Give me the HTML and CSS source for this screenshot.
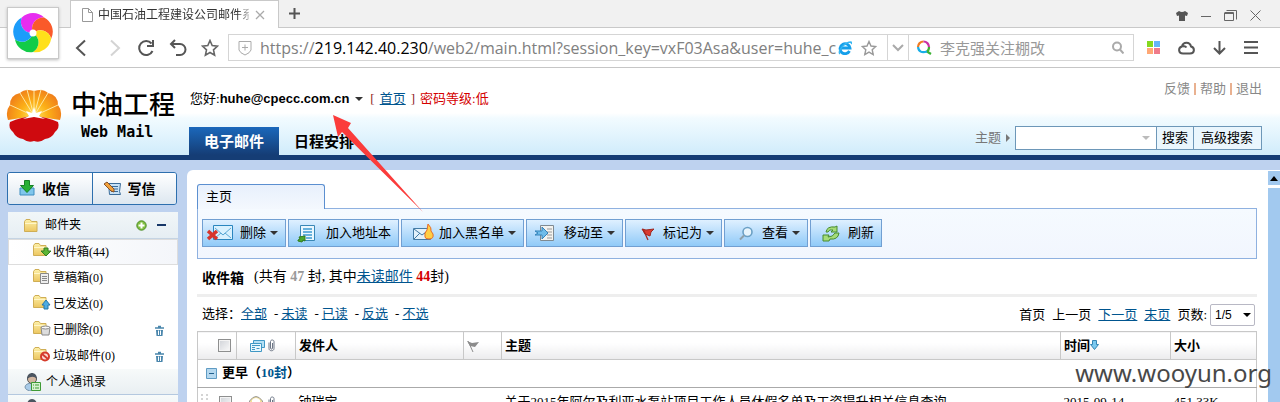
FILE: index.html
```html
<!DOCTYPE html>
<html lang="zh-CN">
<head>
<meta charset="utf-8">
<title>中国石油工程建设公司邮件系统</title>
<link rel="stylesheet" href="styles.css">
</head>
<body>
<svg class="defs" aria-hidden="true">
  <defs>
    <linearGradient id="gold" x1="0" y1="0" x2="0" y2="1"><stop offset="0" stop-color="#fdf0a8"/><stop offset="1" stop-color="#ecc660"/></linearGradient>
    <radialGradient id="petal" gradientUnits="userSpaceOnUse" cx="28" cy="28" r="28"><stop offset="0" stop-color="#ffe860"/><stop offset=".5" stop-color="#fcb017"/><stop offset="1" stop-color="#f0801a"/></radialGradient>
    <g id="folder"><path d="M.5 12.500V2.500L2 .5h4l1.500 2h5.500v10z" fill="url(#gold)" stroke="#cfae55"/><path d="M1 4.500h11.500" stroke="#fff6c8"/></g>
    <g id="bin"><path d="M0 3h9M3 1.500h3" stroke="#4a86ac" stroke-width="1.500"/><path d="M1 5h7l-.5 6h-6z" fill="#4a86ac"/><path d="M3.500 5.500v4.500M5.500 5.500v4.500" stroke="#fff"/></g>
    <g id="clip"><path d="M1 3.500v6c0 3 5 3 5 0v-7c0-2-3.500-2-3.500 0v6.500c0 1.500 2 1.500 2 0v-5" fill="none" stroke="#6d7686"/></g>
    <g id="person"><ellipse cx="8" cy="14" rx="7" ry="4" fill="#a9cbe8" stroke="#7795ad"/><circle cx="8" cy="6" r="4.500" fill="#d2b6a0" stroke="#555"/><path d="M3 6c0-8 10-8 10 0-3-3-6-3-10 0" fill="#4b5560"/></g>
    <path id="blade" d="M0 0A11 11 0 0 1-11.200-15.400A16 16 0 0 1 11.200-15.400A11 11 0 0 0 0 0Z"/>
  </defs>
</svg>

<div class="browser">
  <div class="tabstrip">
    <div class="tab">
      <svg width="12" height="14" fill="#fff" stroke="#999"><path d="M1.500.5h6l4 4v9h-10zM7.500.5v4h4"/></svg>
      <span class="tab-title">中国石油工程建设公司邮件系</span>
      <button class="plain" aria-label="关闭标签"><svg width="10" height="10" stroke="#aaa" stroke-width="1.300"><path d="M1 1l8 8M9 1l-8 8"/></svg></button>
    </div>
    <button class="plain new-tab" aria-label="新标签"><svg width="11" height="11" stroke="#555" stroke-width="2"><path d="M5.500 0v11M0 5.500h11"/></svg></button>
    <div class="win-buttons">
      <button class="plain" aria-label="皮肤"><svg width="12" height="10" fill="#555"><path d="M3 0q3 2 6 0l3 2-1 3-2-.5V10H3V4.500L1 5 0 2z"/></svg></button>
      <button class="plain" aria-label="最小化"><svg width="10" height="10" stroke="#666"><path d="M0 5.500h10"/></svg></button>
      <button class="plain" aria-label="还原"><svg width="13" height="11" fill="none" stroke="#666"><path d="M.5 3v7.500h9V2.500h-9M.5 3.500h9M2.500 .5h10v9"/></svg></button>
      <button class="plain" aria-label="关闭"><svg width="11" height="11" stroke="#666"><path d="M.5.5l10 10M10.500.5l-10 10"/></svg></button>
    </div>
  </div>
  <div class="navbar">
    <div class="nav-buttons">
      <button class="plain" aria-label="后退"><svg width="18" height="18" fill="none" stroke="#555" stroke-width="2"><path d="M12 1.500L4 9l8 7.500"/></svg></button>
      <button class="plain" aria-label="前进"><svg width="18" height="18" fill="none" stroke="#d4d4d4" stroke-width="2"><path d="M6 1.500L14 9l-8 7.500"/></svg></button>
      <button class="plain" aria-label="刷新"><svg width="18" height="18" fill="none" stroke="#555" stroke-width="2"><path d="M14.500 4.500A7 7 0 1 0 15.500 12M16 1v6h-6"/></svg></button>
      <button class="plain" aria-label="撤销"><svg width="18" height="18" fill="none" stroke="#555" stroke-width="2"><path d="M2 5h9a5 5 0 0 1 0 11H7M6 1L2 5l4 4"/></svg></button>
      <button class="plain" aria-label="收藏"><svg width="18" height="18" fill="none" stroke="#666" stroke-width="1.600"><path d="M9 1.500l2.200 5 5.300.6-4 3.700 1.100 5.400L9 13.500l-4.600 2.700 1.100-5.400-4-3.700 5.300-.6z"/></svg></button>
    </div>
    <div class="address">
      <svg width="14" height="16" fill="none" stroke="#aaa"><path d="M1 1.500h12V10q-1 3-6 5-5-2-6-5zM7 4.500v6M4 7.500h6"/></svg>
      <div class="url">https://<b>219.142.40.230</b>/web2/main.html?session_key=vxF03Asa&amp;user=huhe_cp</div>
      <svg width="14" height="14" fill="none"><path d="M2.500 7H12A5 5 0 1 0 11.500 10" stroke="#159fea" stroke-width="2.800"/><path d="M2 13C-1 10 7 1 13 1q1 1 0 2" stroke="#35b6f2" stroke-width="1.300"/></svg>
      <button class="plain" aria-label="添加收藏"><svg width="16" height="16" fill="none" stroke="#999" stroke-width="1.400"><path d="M8 1.500l2 4.500 4.700.5-3.500 3.200 1 4.800L8 12.100l-4.200 2.400 1-4.800L1.300 6.500 6 6z"/></svg></button>
      <button class="plain drop" aria-label="展开"><svg width="12" height="8" fill="none" stroke="#aaa" stroke-width="2"><path d="M1 1l5 5 5-5"/></svg></button>
      <svg class="engine" width="16" height="15" fill="none" stroke-width="2.200"><path d="M2 7a5.500 5.500 0 0 1 5.500-5.500" stroke="#f27b21"/><path d="M7.500 1.500A5.500 5.500 0 0 1 13 7" stroke="#cc31a5"/><path d="M13 7q0 3.500-2 4.500l4 2.500" stroke="#3bb334"/><path d="M11 11.500Q3 14 2 7" stroke="#18aee7"/></svg>
      <input class="web-search" aria-label="网页搜索" value="李克强关注棚改">
      <button class="plain lens" aria-label="搜索"><svg width="12" height="13" fill="none" stroke="#aaa" stroke-width="2"><circle cx="5" cy="5.500" r="4"/><path d="M8 8.500l3.500 4"/></svg></button>
    </div>
    <div class="nav-tools">
      <button class="plain" aria-label="应用"><svg width="13" height="13"><path fill="#84d91f" d="M0 0h6v6H0z"/><path fill="#63b5f8" d="M7 0h6v6H7z"/><path fill="#ffa875" d="M0 7h6v6H0z"/><path fill="#ef7b8a" d="M7 7h6v6H7z"/></svg></button>
      <button class="plain" aria-label="云"><svg width="17" height="14" fill="none" stroke="#555" stroke-width="2"><path d="M5 12.500h7c5 0 5-6 1-7-1-5-8-5-9 0-4 1-4 7 1 7zM5 5.500q2-1 3.500 1"/></svg></button>
      <button class="plain" aria-label="下载"><svg width="13" height="14" fill="none" stroke="#555" stroke-width="2"><path d="M6.500 0v12M1 7l5.500 5.500L12 7"/></svg></button>
      <button class="plain" aria-label="菜单"><svg width="14" height="13" stroke="#555" stroke-width="2"><path d="M0 1h14M0 6.500h14M0 12h14"/></svg></button>
    </div>
  </div>
  <div class="avatar">
    <svg width="42" height="42" viewBox="-21 -21 42 42">
      <use href="#blade" fill="#e72df0"/>
      <use href="#blade" fill="#fa5a2a" transform="rotate(72)"/>
      <use href="#blade" fill="#ffe01a" transform="rotate(144)"/>
      <use href="#blade" fill="#12cc48" transform="rotate(216)"/>
      <use href="#blade" fill="#1c9cfa" transform="rotate(288)"/>
      <circle r="3.500" fill="#fff"/>
    </svg>
  </div>
</div>

<header class="mail-head">
  <div class="logo">
    <svg width="56" height="57" viewBox="0 0 56 57">
      <path d="M28 28L14 5q5-5 14-2 9-3 14 2zM28 28L14 5Q4 7 4 17q-5 6-2 15zM28 28L42 5q10 2 10 12 5 6 2 15z" fill="url(#petal)"/>
      <path d="M28 28L21 1.500M28 28l7-26.500M28 28L14 5M28 28L42 5M28 28L4 17M28 28l24-11M28 28V2" stroke="#ffe7a0"/>
      <path d="M4 34q11-5 24-6 13 1 24 6 2 6-3 10-3 6-10 7-5 4-11 2-6 2-11-2-7-1-10-7-5-4-3-10z" fill="#cf0a0f"/>
      <path d="M28 19l2 6 6-2-3 5 6 3-11-2-11 2 6-3-3-5 6 2z" fill="#fff"/>
    </svg>
    <div class="brand"><strong>中油工程</strong><span>Web Mail</span></div>
  </div>
  <div class="head-main">
    <div class="greet"><span>您好:</span><b>huhe@cpecc.com.cn</b><i class="caret"></i><span class="home"><span>[</span><a href="#">首页</a><span>]</span></span><span class="level">密码等级:低</span></div>
    <nav class="main-tabs"><a class="active" href="#">电子邮件</a><a href="#">日程安排</a></nav>
  </div>
  <div class="head-side">
    <div class="quick"><a href="#">反馈</a><i></i><a href="#">帮助</a><i></i><a href="#">退出</a></div>
    <form class="mail-search">
      <label for="q">主题</label><i class="tri"></i>
      <div class="search-box">
        <input id="q" type="text"><i class="caret pale"></i>
        <button type="button">搜索</button><button type="button" class="adv">高级搜索</button>
      </div>
    </form>
  </div>
</header>

<div class="workspace">
  <aside class="sidebar">
    <div class="compose">
      <button><svg width="16" height="16"><path d="M1 8h14v7H1z" fill="#7fc6ec" stroke="#3e8ec0"/><path d="M5.500.5h5v5h4L8 12.500 1.500 5.500h4z" fill="#27b035" stroke="#168026"/></svg>收信</button>
      <button><svg width="17" height="16"><path d="M4.500 3.500h12l-1 8 1 3h-11z" fill="#c7e2f7" stroke="#3b6c99"/><path d="M8 6.500h6M8 9h6M7 11.500h7" stroke="#3b6c99"/><path d="M0 4l3-2 7 7v3l-3-1z" fill="#f2a13a" stroke="#85512a"/></svg>写信</button>
    </div>
    <div class="folders">
      <div class="folder-head"><svg width="14" height="13"><use href="#folder"/></svg><span>邮件夹</span>
        <button class="plain plus" aria-label="新建"><svg width="11" height="11"><circle cx="5.500" cy="5.500" r="4.700" fill="#80be3f" stroke="#4c8d28"/><path d="M5.500 2.500v6M2.500 5.500h6" stroke="#fff" stroke-width="2"/></svg></button>
        <button class="plain" aria-label="收起"><svg width="9" height="2"><path d="M0 0h9v2H0z" fill="#173768"/></svg></button></div>
      <a class="folder on" href="#"><svg width="18" height="15"><use href="#folder"/><path d="M11 5h4v3h3l-5 5-5-5h3z" fill="#5cb536" stroke="#347d20"/></svg><span>收件箱(44)</span></a>
      <a class="folder" href="#"><svg width="18" height="15"><use href="#folder"/><path d="M7.500 4.500h8v10h-8z" fill="#eee" stroke="#888"/><path d="M9 7.500h5M9 9.500h5M9 11.500h5" stroke="#888"/></svg><span>草稿箱(0)</span></a>
      <a class="folder" href="#"><svg width="18" height="15"><use href="#folder"/><path d="M11 14h4v-4h2l-4-5-4 5h2z" fill="#4dabe3" stroke="#2676a9"/></svg><span>已发送(0)</span></a>
      <a class="folder" href="#"><svg width="18" height="15"><use href="#folder"/><path d="M8 6h9l-1 8H9z" fill="#ddd" stroke="#888"/><ellipse cx="12.500" cy="6.500" rx="4" ry="1.500" fill="#f8f8f8" stroke="#888"/></svg><span>已删除(0)</span><svg class="bin" width="9" height="11"><use href="#bin"/></svg></a>
      <a class="folder" href="#"><svg width="18" height="15"><use href="#folder"/><circle cx="12" cy="9.500" r="4" fill="#fbd9d3" stroke="#d53b2b" stroke-width="2"/><path d="M9 7l6 5" stroke="#d53b2b" stroke-width="2"/></svg><span>垃圾邮件(0)</span><svg class="bin" width="9" height="11"><use href="#bin"/></svg></a>
      <a class="contacts" href="#"><svg width="18" height="18"><use href="#person"/><path d="M7.500 9.500h9v8h-9z" fill="#d8f2cf" stroke="#3e9b35"/><path d="M9 12h1m1 0h4m-6 3h1m1 0h4" stroke="#3e9b35"/></svg><span>个人通讯录</span></a>
      <a class="contacts" href="#" aria-label="联系人"><svg width="18" height="18"><use href="#person"/></svg></a>
    </div>
  </aside>

  <main class="panel">
    <div class="page-tab">主页</div>
    <div class="toolbar">
      <button><svg width="37" height="26"><path d="M10.500 5.500h19v14h-19z" fill="#d9f1fe" stroke="#2a86bf"/><path d="M12 18l6-5 2 2 2-2 6 5M12 8l8 7 8-7" fill="none" stroke="#5da9d4"/><path d="M5 11l9 8M14 11l-9 8" stroke="#d6352d" stroke-width="3.500"/></svg>删除<i class="caret"></i></button>
      <button><svg width="37" height="26"><path d="M11.500 5.500h14v15h-14z" fill="#eaf7fe" stroke="#3987b6"/><path d="M14 9h9M14 12h9M14 15h9M17 18h6" stroke="#3d9bd1" stroke-width="1.500"/><path d="M9 20l2-1-1-2 6-1v5l-2-1-1 2-4-1z" fill="#4ba82e" stroke="#327d1c"/></svg>加入地址本</button>
      <button><svg width="37" height="26"><path d="M11.500 8.500h17v11h-17z" fill="#e3f2fb" stroke="#447ba5"/><path d="M12 9l8 6 8-6M12 19l6-6M28 19l-6-6" fill="none" stroke="#447ba5"/><path d="M23 17q-1-4 2-7l1-6q4 4 3 7l2 3q1 5-4 5-4 0-4-2" fill="#ffcf45" stroke="#e86c28"/></svg>加入黑名单<i class="caret"></i></button>
      <button><svg width="37" height="26"><path d="M13.500 5.500h13v15h-13z" fill="#f3f3ef" stroke="#7f8a91"/><path d="M20 9h5M20 12h5M20 15h5M20 18h5" stroke="#999"/><path d="M8 11h7V7l6 6-6 6v-4H8l3-2z" fill="#6fbce9" stroke="#3382ba"/></svg>移动至<i class="caret"></i></button>
      <button><svg width="37" height="26"><path d="M16 9l4 1 8-1-3 3-1 4-5-2z" fill="#da3b31" stroke="#9d2922"/><path d="M17 9l5 11" stroke="#a82721" stroke-width="1.300"/></svg>标记为<i class="caret"></i></button>
      <button><svg width="37" height="26"><circle cx="22.500" cy="12" r="4.500" fill="#e7f4fc" stroke="#6ba0c5" stroke-width="1.600"/><path d="M19 15.500l-4 4" stroke="#8fa0aa" stroke-width="2"/></svg>查看<i class="caret"></i></button>
      <button><svg width="37" height="26" stroke="#478b30" fill="#a5dc78"><path d="M15 12q1-6 9-5l2-1v6h-6l2-2q-4-1-5 2z"/><path d="M28 13q-1 7-9 6l-1 2-6 0v-6h6l-1 2q5 0 7-4z"/></svg>刷新</button>
    </div>
    <div class="summary"><h1>收件箱</h1><span>(共有 <b class="total">47</b> 封, 其中<a href="#">未读邮件</a> <b class="unread">44</b>封)</span></div>
    <div class="list-tools">
      <div class="select-line">选择：<a href="#">全部</a><i>-</i><a href="#">未读</a><i>-</i><a href="#">已读</a><i>-</i><a href="#">反选</a><i>-</i><a href="#">不选</a></div>
      <div class="pager"><span>首页</span><span>上一页</span><a href="#">下一页</a><a href="#">末页</a><label for="pg">页数:</label><div class="page-pick"><select id="pg"><option>1/5</option></select><i class="caret"></i></div></div>
    </div>
    <table class="mails">
      <colgroup><col class="c-check"><col class="c-icons"><col class="c-from"><col class="c-flag"><col><col class="c-time"><col class="c-size"></colgroup>
      <thead><tr>
        <th class="check"><input type="checkbox" aria-label="全选"></th>
        <th class="icons"><svg width="27" height="14"><path d="M4.500 4V1.500h11v7H13" fill="#b5e0f4" stroke="#4098c5"/><path d="M1.500 4.500h11v8h-11z" fill="#e9f7fd" stroke="#4098c5"/><path d="M3 6.500h8" stroke="#4098c5"/><path d="M3 8.500h3M3 10.500h3M7.500 9.500h3" stroke="#4098c5"/><use href="#clip" x="19" y="0"/></svg></th>
        <th>发件人</th>
        <th class="flag"><svg width="13" height="12"><path d="M0 1l5 2 7-1-4 5-5-1z" fill="#8c8c8c"/><path d="M1 1l5 11" stroke="#8c8c8c"/></svg></th>
        <th>主题</th>
        <th>时间<svg width="9" height="11"><path d="M2.500.5h4v4h2l-4 5-4-5h2z" fill="#7cc9ef" stroke="#3586b4"/></svg></th>
        <th>大小</th>
      </tr></thead>
      <tbody>
        <tr class="group"><td colspan="7"><svg width="11" height="11"><path d="M.5.5h10v10H.5z" fill="#b5d8ef" stroke="#5f9bc3"/><path d="M3 5.500h5" stroke="#205f8d"/></svg><b>更早（<a href="#">10封</a>）</b></td></tr>
        <tr class="mail">
          <td class="check"><svg width="8" height="14" fill="#d4d4d4"><path d="M0 0h2v2H0zM5 0h2v2H5zM0 4h2v2H0zM5 4h2v2H5zM0 8h2v2H0zM5 8h2v2H5z"/></svg><input type="checkbox" aria-label="选择邮件"></td>
          <td class="icons"><svg width="27" height="14"><path d="M.5 5q6.500-9 13 0v8H.5z" fill="#f1df9d" stroke="#999"/><path d="M3 4q4-4 8 0v3H3z" fill="#fff"/><use href="#clip" x="19" y="0"/></svg></td>
          <td>钟瑞宝</td><td></td>
          <td>关于2015年阿尔及利亚水泵站项目工作人员休假名单及工资提升相关信息查询</td>
          <td>2015-09-14</td><td>451.33K</td>
        </tr>
      </tbody>
    </table>
  </main>
  <div class="scrollbar"><button aria-label="向上滚动"><svg width="8" height="5"><path d="M0 5l4-5 4 5z"/></svg></button><div class="thumb"></div></div>
</div>

<svg class="pointer" width="92" height="100"><path d="M0 1l18 8-3 5 75 84L9 18l-4 5z" fill="#fb3c3b"/></svg>
<div class="watermark">www.wooyun.org</div>
</body>
</html>
```
FILE: styles.css
```css
* { box-sizing: border-box; }
body {
  margin: 0;
  height: 100vh;
  overflow: hidden;
  display: flex;
  flex-direction: column;
  position: relative;
  background: #fff;
  color: #000;
  font: 13px/20px "Liberation Serif", "Noto Sans CJK SC", serif;
}
a { color: #00558f; }
svg { flex: none; }
button, input, select { font: inherit; color: inherit; }
i { font-style: normal; }
.defs { position: absolute; width: 0; height: 0; }
.plain { border: 0; padding: 0; background: none; display: flex; align-items: center; justify-content: center; }
.caret { display: inline-block; border: 4px solid transparent; border-top: 4px solid #333; border-bottom: 0; pointer-events: none; }

/* browser frame */
.browser { position: relative; flex: none; border-bottom: 1px solid #c6c6c6; font-family: "Open Sans", "Noto Sans CJK SC", sans-serif; }
.tabstrip { height: 28px; padding-left: 70px; display: flex; background: #f1f1f1; border-bottom: 1px solid #c9c9c9; }
.tab { display: flex; align-items: center; width: 209px; height: 28px; padding: 0 13px 0 10px; background: #fff; border: 1px solid #c9c9c9; border-bottom: 0; }
.tab-title { flex: 1; margin: 0 6px 0 5px; overflow: hidden; white-space: nowrap; font-size: 12px; color: #333; -webkit-mask-image: linear-gradient(90deg, #000 92%, rgba(0, 0, 0, .3)); mask-image: linear-gradient(90deg, #000 92%, rgba(0, 0, 0, .3)); }
.new-tab { margin-left: 10px; }
.win-buttons { margin-left: auto; padding: 4px 19px 0 0; display: flex; gap: 13px; }
.navbar { height: 39px; padding: 0 22px 0 73px; display: flex; align-items: center; }
.nav-buttons { display: flex; gap: 14px; }
.address { flex: 1; min-width: 0; margin-left: 9px; height: 27px; border: 1px solid #d5d5d5; display: flex; align-items: center; padding-left: 9px; }
.url { flex: 1; min-width: 0; margin: 0 2px 0 8px; overflow: hidden; white-space: nowrap; font-size: 16px; color: #808080; }
.url b { font-weight: 400; color: #000; }
.address > .plain { margin-left: 9px; }
.address > .drop { align-self: stretch; width: 22px; margin-left: 10px; border: solid #d5d5d5; border-width: 0 1px; }
.engine { margin-left: 7px; }
.web-search { width: 172px; margin-left: 8px; border: 0; padding: 0; font-size: 15px; color: #999; background: none; }
.address > .lens { margin: 0 9px 0 0; }
.nav-tools { margin-left: 13px; display: flex; align-items: center; gap: 18px; }
.avatar { position: absolute; left: 7px; top: 7px; width: 52px; height: 52px; display: grid; place-items: center; background: #fff; border: 1px solid #c9c9c9; box-shadow: 0 1px 3px #bbb; }

/* mail header */
.mail-head { flex: none; height: 92px; display: flex; background: linear-gradient(#fff 45px, #f2fbff 50px, #d0ecfb); border-bottom: 5px solid #153d75; }
.logo { width: 189px; padding: 20px 0 0 6px; display: flex; gap: 9px; }
.brand { font-family: "DejaVu Sans Mono", "Noto Sans CJK SC", monospace; }
.brand strong { display: block; font-size: 26px; line-height: 34px; font-weight: 500; }
.brand span { display: block; padding-left: 10px; font-size: 15px; line-height: 20px; font-weight: 700; }
.head-main { display: flex; flex-direction: column; justify-content: space-between; }
.greet { display: flex; align-items: center; padding: 21px 0 0 1px; font-size: 13px; }
.greet b { font: bold 13px/20px "Liberation Sans", Arial, sans-serif; }
.greet .caret { margin: 0 7px 0 6px; }
.home { display: flex; gap: 5px; color: #8c1a1a; }
.level { margin-left: 5px; color: #d40000; }
.main-tabs { display: flex; font: bold 15px/28px "Noto Sans CJK SC", sans-serif; }
.main-tabs a { padding: 0 15px; color: #000; text-decoration: none; }
.main-tabs .active { color: #fff; background: linear-gradient(#1b68bb, #153d75); }
.head-side { margin-left: auto; padding: 11px 18px 5px 0; display: flex; flex-direction: column; align-items: flex-end; justify-content: space-between; }
.quick { display: flex; align-items: center; gap: 4px; }
.quick a { color: #888; text-decoration: none; }
.quick i { width: 2px; height: 12px; background: #e9b190; }
.mail-search { display: flex; align-items: center; color: #777; }
.tri { margin: 0 5px; border: 4px solid transparent; border-left: 4px solid #777; border-right: 0; }
.search-box { display: flex; align-items: center; height: 24px; border: 1px solid #6d97b8; color: #000; }
.search-box input { width: 140px; height: 22px; padding: 0 18px 0 4px; border: 0; background: #fff; }
.pale { margin: 0 6px 0 -14px; border-top-color: #bbb; }
.search-box button { height: 22px; padding: 0 5px; border: 0; border-left: 1px solid #6d97b8; background: #eaf6fd; }
.search-box .adv { padding: 0 8px 0 7px; }

/* workspace */
.workspace { flex: 1; min-height: 0; display: flex; padding: 10px 0 0 7px; background: #bed2ef; }
.sidebar { width: 171px; padding-top: 2px; margin-right: 9px; overflow: hidden; }
.compose { display: flex; width: 170px; height: 33px; border: 1px solid #2d6fae; border-radius: 3px; overflow: hidden; }
.compose button { flex: 1; display: flex; align-items: center; gap: 7px; padding: 0 0 2px 11px; border: 0; background: linear-gradient(#fff, #dde7f0); font: bold 14px/20px "Noto Sans CJK SC", sans-serif; }
.compose button + button { border-left: 1px solid #2d6fae; }
.folders { margin: 7px 0 0 1px; background: #fff; font-size: 12px; }
.folder-head { display: flex; align-items: center; height: 27px; padding: 0 12px 0 16px; background: linear-gradient(#f1f6f8, #e6eef3); border-bottom: 1px solid #c5d4e3; }
.folder-head span { margin-left: 7px; }
.plus { margin: 0 10px 0 auto; }
.folder { display: flex; align-items: center; height: 26px; padding: 0 14px 0 25px; color: #000; text-decoration: none; }
.folder.on { background: linear-gradient(90deg, #fff, #f4f6fa); border: 1px solid #ddd; padding-left: 24px; }
.folder span { margin-left: 2px; }
.folder svg:first-child { margin-bottom: 3px; }
.folder .bin { margin-left: auto; }
.contacts { display: flex; align-items: center; gap: 4px; height: 26px; padding-left: 16px; color: #000; text-decoration: none; background: linear-gradient(#f7fafa, #e9eff2); border-bottom: 1px solid #b4c8df; }
.panel { flex: 1; min-width: 0; padding: 14px 10px 0; background: #fff; border-radius: 6px 0 0 0; }
.page-tab { position: relative; width: 128px; height: 25px; padding: 2px 8px; border: 1px solid #5b8fd0; border-bottom: 0; border-radius: 3px 3px 0 0; background: linear-gradient(#e8f0fc, #f4f8fe); margin-bottom: -1px; }
.toolbar { display: flex; gap: 2px; height: 51px; padding: 10px 4px; background: linear-gradient(#f5faff, #f2f6fe); border: 1px solid #8fb1e0; }
.toolbar button { display: flex; align-items: center; height: 28px; padding: 0 7px 0 0; border: 1px solid #719fd2; background: linear-gradient(#dff0ff, #90caf8); }
.toolbar .caret { margin-left: 4px; }
.summary { display: flex; align-items: center; gap: 10px; height: 38px; border-bottom: 3px solid #eee; padding-left: 5px; font-size: 14px; }
.summary h1 { margin: 0; font: bold 14px/20px "Noto Sans CJK SC", sans-serif; }
.total { color: #999; }
.unread { color: #d40000; }
.list-tools { display: flex; align-items: flex-start; justify-content: space-between; height: 34px; padding: 7px 2px 0 5px; }
.select-line i { margin: 0 3px 0 7px; }
.pager { display: flex; align-items: center; gap: 7px; }
.page-pick { display: flex; align-items: center; margin-left: -4px; }
.page-pick select { width: 45px; height: 22px; padding: 0 4px; border: 1px solid #b8b8c4; border-radius: 2px; appearance: none; background: #fff; font: 12px/18px "Liberation Sans", sans-serif; }
.page-pick .caret { margin: 0 4px 0 -12px; border-top-color: #000; }
.mails { width: 100%; border-collapse: collapse; table-layout: fixed; }
.c-check { width: 39px; }
.c-icons { width: 59px; }
.c-from { width: 168px; }
.c-flag { width: 38px; }
.c-time { width: 110px; }
.c-size { width: 86px; }
.mails th, .mails td { padding: 0 3px; height: 28px; text-align: left; white-space: nowrap; }
.mails th { padding-bottom: 2px; border: 1px solid #c8c8c8; background: linear-gradient(#fff 40%, #ebebed); font-family: "Noto Sans CJK SC", sans-serif; }
.mails svg { vertical-align: middle; }
.mails td { border-bottom: 1px solid #aaa; }
.mails tbody { border: solid #c8c8c8; border-width: 0 1px; }
.mails .group td { padding-left: 8px; padding-bottom: 2px; }
.mails .group b { margin-left: 5px; }
.mails .group a { text-decoration: none; }
.mails .check { text-align: right; }
.mails .check svg { float: left; margin-top: 2px; }
.mails .check input { width: 13px; height: 13px; margin: 0 2px 0 0; vertical-align: middle; appearance: none; border: 1px solid #8e8f8f; background: linear-gradient(135deg, #d0d3d8, #fafafa); box-shadow: inset 0 0 0 1px #f4f4f4; }
.mails .icons { padding-left: 12px; }
.scrollbar { width: 13px; padding: 1px 0 0 1px; background: #fff; }
.scrollbar button { display: grid; place-items: center; width: 12px; height: 14px; margin-bottom: 3px; padding: 0; border: 0; background: #a2c9ef; }
.thumb { height: 100%; background: #a2c9ef; }

/* overlays */
.pointer { position: absolute; left: 333px; top: 114px; }
.watermark { position: absolute; right: 8px; top: 356px; font: 24px/34px "Noto Sans", sans-serif; color: #484848; }
```
